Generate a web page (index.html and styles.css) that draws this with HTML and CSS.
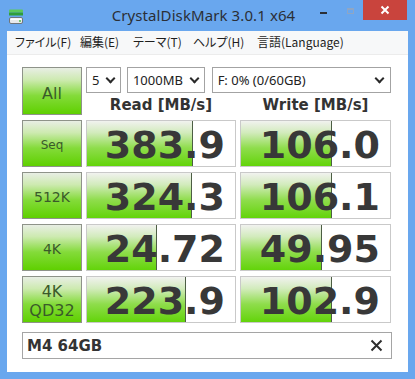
FILE: index.html
```html
<!DOCTYPE html>
<html lang="ja">
<head>
  <meta charset="UTF-8" />
  <title>CrystalDiskMark 3.0.1 x64</title>
  <link rel="stylesheet" href="styles.css">
</head>
<body>
  <div class="window">

    <div class="titlebar">
      <div class="app-icon">
        <svg width="16" height="16" viewBox="0 0 16 16">
          <rect x="1" y="0.5" width="14" height="3" rx="1" fill="#5cc95a"/>
          <rect x="1" y="3.5" width="14" height="3" fill="#2f9e3a"/>
          <rect x="1.5" y="8.5" width="13" height="6" rx="1.5" fill="#e6e9ec" stroke="#6f757c"/>
          <rect x="2.5" y="9.5" width="11" height="1.5" fill="#ffffff"/>
          <circle cx="12" cy="12" r="1" fill="#4fbf4a"/>
        </svg>
      </div>
      <div class="title">CrystalDiskMark 3.0.1 x64</div>
      <div class="controls">
        <div class="ctl ctl-min"><span class="dash"></span></div>
        <div class="ctl ctl-max"><span class="box"></span></div>
        <div class="ctl ctl-close">
          <svg width="10" height="10" viewBox="0 0 10 10">
            <path d="M1.5 1.5 L8.5 8.5 M8.5 1.5 L1.5 8.5" stroke="#fff" stroke-width="2"/>
          </svg>
        </div>
      </div>
    </div>

    <ul class="menubar">
      <li class="m1">ファイル(F)</li>
      <li class="m2">編集(E)</li>
      <li class="m3">テーマ(T)</li>
      <li class="m4">ヘルプ(H)</li>
      <li>言語(Language)</li>
    </ul>

    <div class="client">
      <div class="grid">
        <div class="btn btn-all">All</div>
        <div class="top">
          <div class="selects">
            <div class="select sel-count">5<span class="chev"></span></div>
            <div class="select sel-size">1000MB<span class="chev"></span></div>
            <div class="select sel-drive">F: 0% (0/60GB)<span class="chev"></span></div>
          </div>
          <div class="heads">
            <div class="head">Read [MB/s]</div>
            <div class="head">Write [MB/s]</div>
          </div>
        </div>

        <div class="btn btn-sm">Seq</div>
        <div class="cell" style="--w:106px">383.9</div>
        <div class="cell" style="--w:91px">106.0</div>

        <div class="btn">512K</div>
        <div class="cell" style="--w:105px">324.3</div>
        <div class="cell" style="--w:91px">106.1</div>

        <div class="btn">4K</div>
        <div class="cell" style="--w:70px">24.72</div>
        <div class="cell" style="--w:81px">49.95</div>

        <div class="btn btn-two">4K<br>QD32</div>
        <div class="cell" style="--w:99px">223.9</div>
        <div class="cell" style="--w:91px">102.9</div>
      </div>

      <div class="comment">
        <span>M4 64GB</span>
        <svg width="13" height="13" viewBox="0 0 13 13">
          <path d="M1.5 1.5 L11.5 11.5 M11.5 1.5 L1.5 11.5" stroke="#2e2e2e" stroke-width="2"/>
        </svg>
      </div>
    </div>

  </div>
</body>
</html>
```

FILE: styles.css
```css
* {
  margin: 0;
  padding: 0;
  box-sizing: border-box;
}

body {
  width: 415px;
  height: 379px;
  overflow: hidden;
  background: #69a7ee;
  font-family: "Noto Sans", sans-serif;
}

.window {
  width: 415px;
  height: 379px;
  background: #69a7ee;
  padding: 0 7px 7px 7px;
  display: flex;
  flex-direction: column;
}

/* BARRA DE TÍTULO */
.titlebar {
  height: 31px;
  display: grid;
  grid-template-columns: 1fr auto 1fr;
  align-items: start;
  margin: 0 -7px;
  padding-right: 8px;
}

.app-icon {
  padding: 8px 0 0 8px;
}

.title {
  font-size: 15px;
  color: #2b2f36;
  line-height: 31px;
  letter-spacing: 0.1px;
}

.controls {
  display: flex;
  justify-content: flex-end;
}

.ctl {
  height: 20px;
  display: flex;
  align-items: center;
  justify-content: center;
}

.ctl-min {
  width: 27px;
}

.ctl-min .dash {
  width: 7px;
  height: 2px;
  background: #2b2f36;
  margin-top: 6px;
}

.ctl-max {
  width: 26px;
}

.ctl-max .box {
  width: 7px;
  height: 6px;
  border: 1px solid #8fa6c4;
  border-top-width: 2px;
  margin-top: 2px;
}

.ctl-close {
  width: 44px;
  background: #c9443d;
}

/* MENU */
.menubar {
  list-style: none;
  display: flex;
  height: 24px;
  background: #f7f8f9;
  border-bottom: 1px solid #ececec;
  padding-left: 8px;
  font-family: "Noto Sans CJK JP", sans-serif;
  font-feature-settings: "palt";
  font-size: 12px;
  line-height: 22px;
  color: #1e1e1e;
}

.menubar .m1 { width: 65px; }
.menubar .m2 { width: 53px; }
.menubar .m3 { width: 60px; }
.menubar .m4 { width: 64px; }

/* ÁREA PRINCIPAL */
.client {
  flex: 1;
  background: #fff;
  padding: 12px 0 0 15px;
}

.grid {
  display: grid;
  grid-template-columns: 60px 150px 151px;
  grid-template-rows: 48px repeat(4, 47px);
  column-gap: 4px;
  row-gap: 5px;
}

.btn {
  border: 1px solid #8e9389;
  background: linear-gradient(#e8eee4 0%, #cdeab0 26%, #84db3a 60%, #5fd000 100%);
  color: #3a5a2a;
  font-family: "DejaVu Sans", sans-serif;
  font-size: 14px;
  display: flex;
  align-items: center;
  justify-content: center;
  text-align: center;
  padding-top: 3px;
}

.btn-all {
  font-size: 16px;
  padding-top: 4px;
}

.btn-sm {
  font-size: 12px;
}

.btn-two {
  font-size: 16px;
  line-height: 19px;
  padding-top: 2px;
}

.top {
  grid-column: 2 / 4;
  display: flex;
  flex-direction: column;
}

.selects {
  display: flex;
  height: 26px;
}

.select {
  position: relative;
  height: 26px;
  border: 1px solid #a3a3a3;
  background: #fff;
  font-size: 13px;
  color: #222;
  line-height: 24px;
  padding-left: 5px;
}

.sel-count { width: 35px; }
.sel-size { width: 78px; margin-left: 6px; }
.sel-drive { width: 180px; margin-left: 7px; }

/* seta do combo */
.chev {
  position: absolute;
  right: 6px;
  top: 7px;
  width: 7px;
  height: 7px;
  border-right: 2px solid #2a2a2a;
  border-bottom: 2px solid #2a2a2a;
  transform: rotate(45deg);
}

.sel-drive .chev { right: 7px; }

.heads {
  display: grid;
  grid-template-columns: 150px 151px;
  column-gap: 4px;
  flex: 1;
}

.head {
  text-align: center;
  font-family: "DejaVu Sans", sans-serif;
  font-weight: bold;
  font-size: 15px;
  color: #333;
  line-height: 22px;
  padding-top: 1px;
}

/* Células de resultado com barra */
.cell {
  height: 47px;
  border: 1px solid #c9c9c9;
  background-color: #fff;
  background-image:
    linear-gradient(to right, transparent calc(var(--w) - 1px), #4c5e44 calc(var(--w) - 1px), #4c5e44 var(--w), transparent var(--w)),
    linear-gradient(#f1f2ef 0%, #d2ebbc 26%, #8fdd4c 60%, #63d40a 100%);
  background-size: 100% 100%, var(--w) 100%;
  background-repeat: no-repeat;
  font-family: "DejaVu Sans", sans-serif;
  font-weight: bold;
  font-size: 38px;
  color: #383838;
  text-align: right;
  line-height: 45px;
  padding: 2px 10px 0 0;
  overflow: hidden;
}

.comment {
  width: 370px;
  height: 27px;
  margin-top: 9px;
  border: 1px solid #a5a5a5;
  display: flex;
  align-items: center;
  justify-content: space-between;
  padding: 0 8px 0 4px;
  font-family: "DejaVu Sans", sans-serif;
  font-weight: bold;
  font-size: 15px;
  color: #333;
}
```
